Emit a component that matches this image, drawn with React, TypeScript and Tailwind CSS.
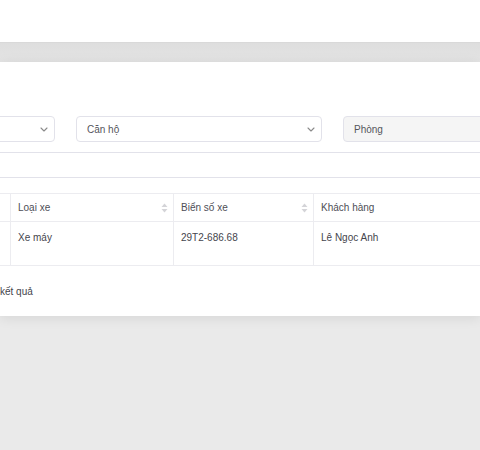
import React from 'react';

function Chevron() {
  return (
    <svg width="8" height="5" viewBox="0 0 8 5" fill="none" className="shrink-0">
      <path d="M1 1l3 3 3-3" stroke="#8a8a8a" strokeWidth="1.1" strokeLinecap="round" strokeLinejoin="round" />
    </svg>
  );
}

function SortIcon() {
  return (
    <svg width="7" height="10" viewBox="0 0 7 10" className="shrink-0">
      <path d="M3.5 0.5L6.5 4H0.5z" fill="#d4d4d8" />
      <path d="M3.5 9.5L0.5 6H6.5z" fill="#d4d4d8" />
    </svg>
  );
}

const columns = [
  { label: 'Loại xe', width: 'w-[163px]', sort: true, value: 'Xe máy' },
  { label: 'Biển số xe', width: 'w-[140px]', sort: true, value: '29T2-686.68' },
  { label: 'Khách hàng', width: 'w-[220px]', sort: false, value: 'Lê Ngọc Anh' },
];

export default function App() {
  return (
    <div
      className="w-[480px] h-[450px] overflow-hidden bg-[#eaeaea] text-[10px] text-[#4a4a52]"
      style={{ fontFamily: '"Liberation Sans", Arial, sans-serif' }}
    >
      <div className="h-[42px] bg-white" />
      <div className="h-[20px] bg-gradient-to-b from-[#dedede] to-[#e4e4e4] border-t border-[#d9d9d9]" />

      <div className="relative bg-white h-[254px] pt-[54px] shadow-[0_2px_12px_rgba(0,0,0,0.09)]">
        {/* filters */}
        <div className="flex gap-[21px] ml-[-191px]">
          <div className="w-[246px] h-[26px] shrink-0 rounded-[4px] border border-[#e2e2ea] bg-white flex items-center justify-end pr-[6px]">
            <Chevron />
          </div>
          <div className="w-[246px] h-[26px] shrink-0 rounded-[4px] border border-[#e2e2ea] bg-white flex items-center justify-between pl-[10px] pr-[6px]">
            <span className="text-[#55555c]">Căn hộ</span>
            <Chevron />
          </div>
          <div className="w-[246px] h-[26px] shrink-0 rounded-[4px] border border-[#e2e2ea] bg-[#f5f5f5] flex items-center pl-[10px]">
            <span className="text-[#55555c]">Phòng</span>
          </div>
        </div>

        {/* search */}
        <div className="mt-[10px] ml-[-10px] w-[500px] h-[26px] rounded-[4px] border border-[#e2e2ea] bg-white" />

        {/* table */}
        <div className="mt-[15px] w-[530px] ml-[-40px]">
          <div className="flex h-[29px] border-t border-b border-[#ececf0]">
            <div className="w-[51px] shrink-0 border-r border-[#ececf0]" />
            {columns.map((c) => (
              <div
                key={c.label}
                className={`${c.width} shrink-0 flex items-center justify-between pl-[7px] pr-[5px] border-r border-[#ececf0]`}
              >
                <span className="text-[#4e4e56]">{c.label}</span>
                {c.sort && <SortIcon />}
              </div>
            ))}
          </div>
          <div className="flex h-[44px] border-b border-[#ececf0]">
            <div className="w-[51px] shrink-0 border-r border-[#ececf0]" />
            {columns.map((c) => (
              <div key={c.label} className={`${c.width} shrink-0 pt-[8px] pl-[7px] border-r border-[#ececf0]`}>
                <span className="text-[#45454d]">{c.value}</span>
              </div>
            ))}
          </div>
        </div>

        <div className="mt-[18px] flex">
          <span className="w-[100px] ml-[-103px] text-right shrink-0">Tìm thấy 1</span>
          <span className="ml-[3px] text-[#45454d]">kết quả</span>
        </div>
      </div>
    </div>
  );
}
